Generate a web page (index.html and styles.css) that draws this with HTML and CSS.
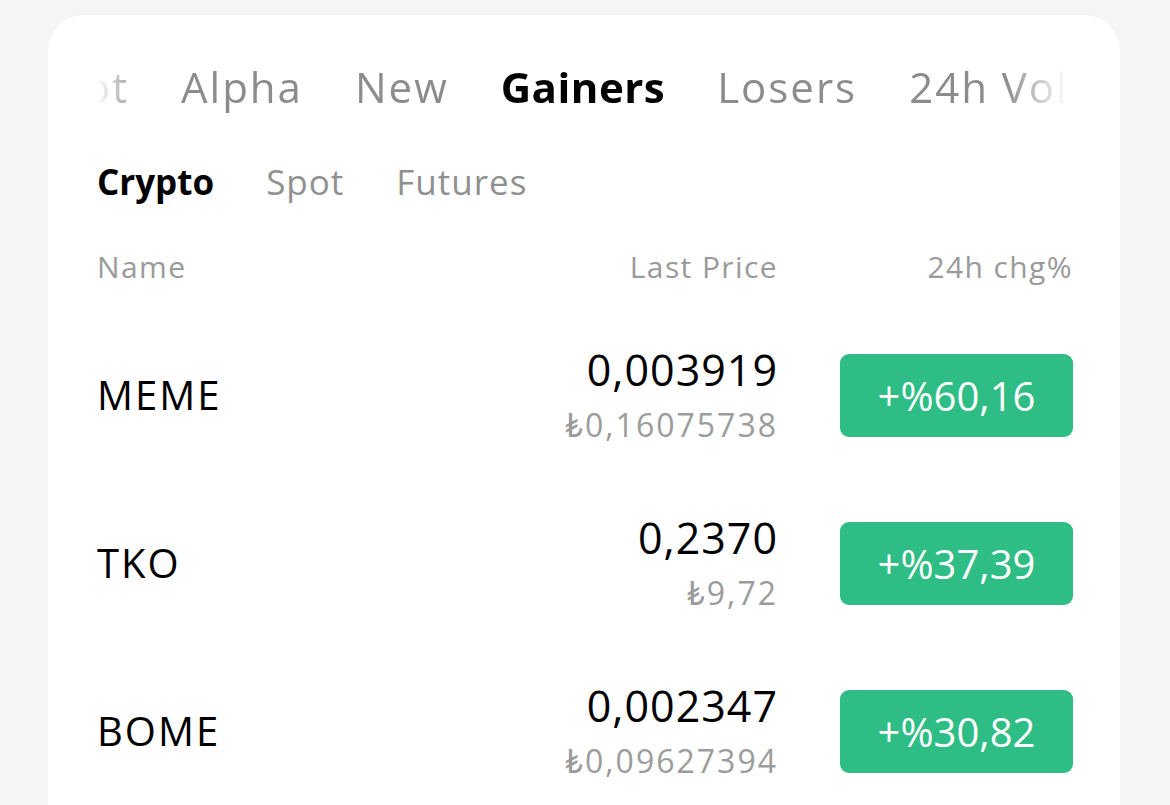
FILE: index.html
```html
<!DOCTYPE html>
<html lang="en">
<head>
    <meta charset="UTF-8">
    <meta name="viewport" content="width=device-width, initial-scale=1.0">
    <title>Markets</title>
    <link rel="stylesheet" href="styles.css">
</head>
<body>
    <div class="market-card">
        <div class="tabs">
            <div class="tab-track">
                <span class="tab">Spot</span>
                <span class="tab">Alpha</span>
                <span class="tab">New</span>
                <span class="tab active">Gainers</span>
                <span class="tab">Losers</span>
                <span class="tab">24h Vol</span>
            </div>
        </div>
        <div class="sub-tabs">
            <span class="sub-tab active">Crypto</span>
            <span class="sub-tab">Spot</span>
            <span class="sub-tab">Futures</span>
        </div>
        <div class="list-head">
            <span>Name</span>
            <span class="right">Last Price</span>
            <span class="right">24h chg%</span>
        </div>
        <div class="coin-row">
            <div class="coin-name">MEME</div>
            <div class="coin-price">
                <div class="price">0,003919</div>
                <div class="price-try">₺0,16075738</div>
            </div>
            <div class="chg">+%60,16</div>
        </div>
        <div class="coin-row">
            <div class="coin-name">TKO</div>
            <div class="coin-price">
                <div class="price">0,2370</div>
                <div class="price-try">₺9,72</div>
            </div>
            <div class="chg">+%37,39</div>
        </div>
        <div class="coin-row">
            <div class="coin-name">BOME</div>
            <div class="coin-price">
                <div class="price">0,002347</div>
                <div class="price-try">₺0,09627394</div>
            </div>
            <div class="chg">+%30,82</div>
        </div>
    </div>
</body>
</html>
```

FILE: styles.css
```css
* {
    margin: 0;
    padding: 0;
    box-sizing: border-box;
}
body {
    background: #f5f5f5;
    font-family: "Open Sans", Lato, sans-serif;
    color: #000;
    overflow: hidden;
}
.market-card {
    margin: 15px 50px 0 48px;
    min-height: 800px;
    background: #fff;
    border-radius: 36px 36px 0 0;
    padding: 44px 47px 0 49px;
}
.tabs {
    overflow: hidden;
    margin-right: 5px;
    -webkit-mask-image: linear-gradient(to right, transparent 0, #000 40px, #000 calc(100% - 62px), transparent 100%);
    mask-image: linear-gradient(to right, transparent 0, #000 40px, #000 calc(100% - 62px), transparent 100%);
}
.tab-track {
    display: flex;
    gap: 52px;
    margin-left: -65px;
    white-space: nowrap;
}
.tab {
    font-size: 42px;
    line-height: 56px;
    letter-spacing: 2px;
    color: #8c8c8c;
}
.tab.active {
    color: #000;
    font-weight: 700;
    letter-spacing: 0.5px;
}
.sub-tabs {
    display: flex;
    gap: 52px;
    margin-top: 45px;
}
.sub-tab {
    font-size: 35px;
    line-height: 44px;
    letter-spacing: 1px;
    color: #909090;
}
.sub-tab.active {
    color: #000;
    font-weight: 700;
    letter-spacing: 0;
}
.list-head {
    display: grid;
    grid-template-columns: 1fr 300px 233px;
    column-gap: 62px;
    margin-top: 45px;
    font-size: 30px;
    line-height: 36px;
    letter-spacing: 1.4px;
    color: #9a9a9a;
}
.right {
    text-align: right;
}
.coin-row {
    display: grid;
    grid-template-columns: 1fr 300px 233px;
    column-gap: 62px;
    align-items: center;
    height: 168px;
}
.list-head + .coin-row {
    margin-top: 26px;
}
.coin-name {
    font-size: 40px;
    line-height: 40px;
    letter-spacing: 2px;
}
.coin-price {
    align-self: start;
    padding-top: 35px;
    text-align: right;
}
.price {
    font-size: 43px;
    line-height: 48px;
    letter-spacing: 1px;
}
.price-try {
    margin-top: 8px;
    font-size: 32px;
    line-height: 46px;
    letter-spacing: 2px;
    color: #9c9c9c;
}
.chg {
    height: 83px;
    border-radius: 9px;
    background: #2ebd85;
    color: #fff;
    font-size: 40px;
    display: flex;
    align-items: center;
    justify-content: center;
}
```
